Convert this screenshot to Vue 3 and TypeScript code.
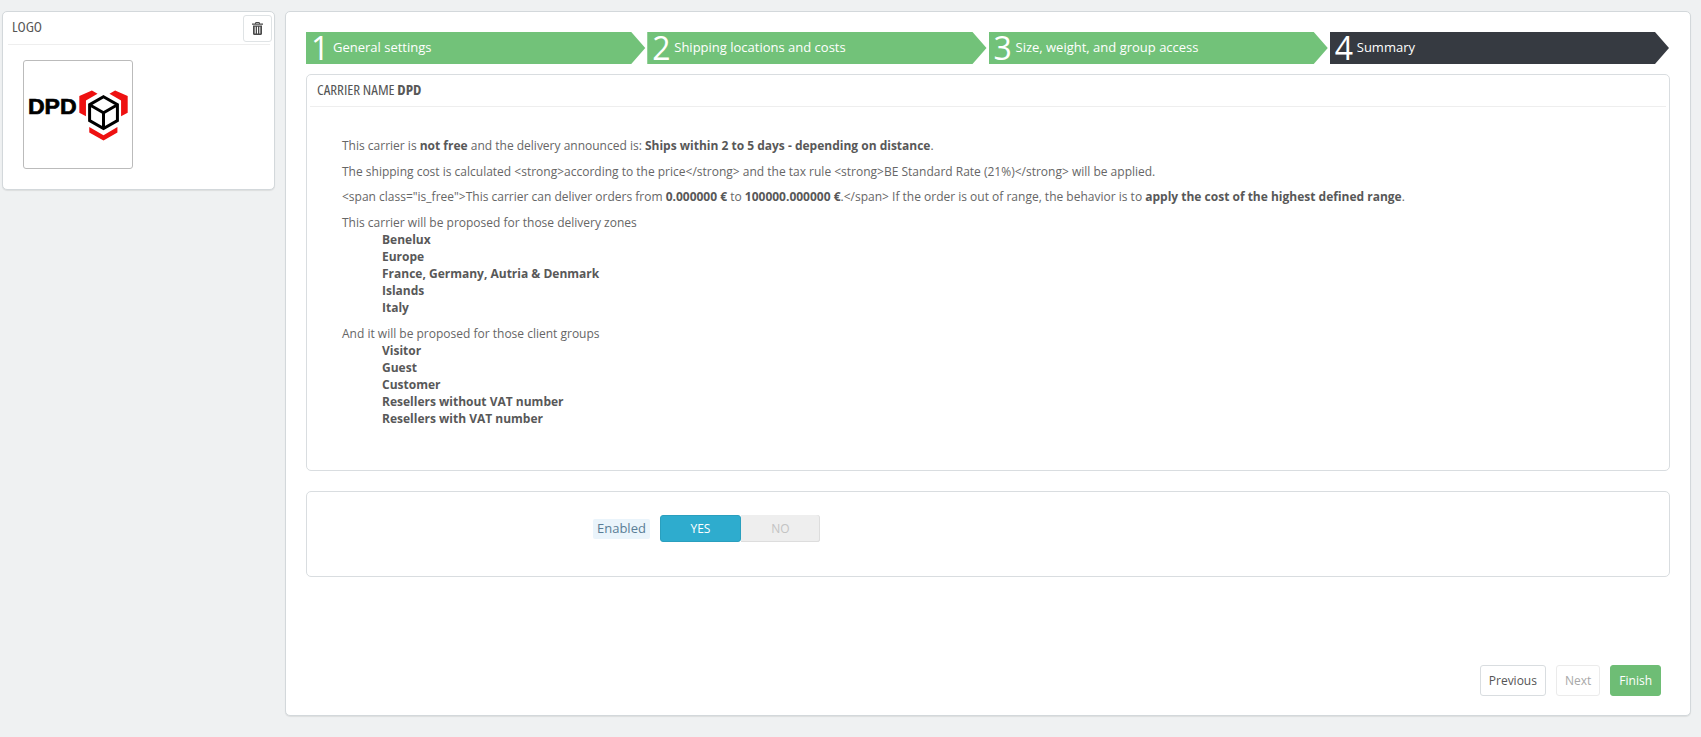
<script setup lang="ts">
interface Step { num: number; title: string; active?: boolean }
const steps: Step[] = [
  { num: 1, title: 'General settings' },
  { num: 2, title: 'Shipping locations and costs' },
  { num: 3, title: 'Size, weight, and group access' },
  { num: 4, title: 'Summary', active: true },
]
const zones = ['Benelux', 'Europe', 'France, Germany, Autria & Denmark', 'Islands', 'Italy']
const groups = ['Visitor', 'Guest', 'Customer', 'Resellers without VAT number', 'Resellers with VAT number']
</script>

<template>
  <div class="page">
    <aside class="panel side">
      <div class="side-head">
        <span class="head-text">LOGO</span>
        <button class="trash" type="button" aria-label="Delete">
          <svg width="11" height="13" viewBox="0 0 11 13">
            <path fill="#4a4a4a" d="M3.6 0h3.8l.7 1.6H11v1.2H0V1.6h2.9zM4.2.9l-.3.7h3.2l-.3-.7zM1 3.4h9v8.4c0 .7-.5 1.2-1.1 1.2H2.1C1.500 13 1 12.500 1 11.800zM2.700 4.700v6.900h1V4.700zM5 4.700v6.900h1V4.700zM7.300 4.700v6.900h1V4.700z" />
          </svg>
        </button>
      </div>
      <div class="logo-box">
        <svg width="108" height="107" viewBox="71 179 326 323">
          <text x="83" y="340" class="logo-text" textLength="147" lengthAdjust="spacingAndGlyphs">DPD</text>
          <path fill="#ee1111" d="M276 268l17 10-35 20v48l-20-11v-50zM346 268l-17 10 35 20v48l20-11v-50zM268 378l43 25 42-25v17l-42 24-43-24z" />
          <path fill="none" stroke="#000" stroke-width="9" stroke-linejoin="miter" d="M311 287l42 24v48l-42 24-42-24v-48zM269 311l42 24 42-24M311 335v48" />
        </svg>
      </div>
    </aside>

    <main class="panel main">
      <div class="stepper">
        <div v-for="s in steps" :key="s.num" class="step" :class="{ active: s.active }">
          <span class="num">{{ s.num }}</span>
          <span class="title">{{ s.title }}</span>
        </div>
      </div>

      <section class="card summary">
        <div class="card-head">CARRIER NAME <b>DPD</b></div>
        <div class="summary-body">
          <p>This carrier is <b>not free</b> and the delivery announced is: <b>Ships within 2 to 5 days - depending on distance</b>.</p>
          <p>The shipping cost is calculated &lt;strong&gt;according to the price&lt;/strong&gt; and the tax rule &lt;strong&gt;BE Standard Rate (21%)&lt;/strong&gt; will be applied.</p>
          <p>&lt;span class="is_free"&gt;This carrier can deliver orders from <b>0.000000 €</b> to <b>100000.000000 €</b>.&lt;/span&gt; If the order is out of range, the behavior is to <b>apply the cost of the highest defined range</b>.</p>
          <div class="block">
            This carrier will be proposed for those delivery zones
            <ul><li v-for="z in zones" :key="z">{{ z }}</li></ul>
          </div>
          <div class="block">
            And it will be proposed for those client groups
            <ul><li v-for="g in groups" :key="g">{{ g }}</li></ul>
          </div>
        </div>
      </section>

      <section class="card status">
        <span class="label">Enabled</span>
        <div class="switch">
          <span class="yes">YES</span>
          <span class="no">NO</span>
        </div>
      </section>

      <footer class="actions">
        <button type="button" class="btn">Previous</button>
        <button type="button" class="btn disabled">Next</button>
        <button type="button" class="btn finish">Finish</button>
      </footer>
    </main>
  </div>
</template>

<style>
html, body { margin: 0; background: #eff1f2; }
</style>

<style scoped>
.page {
  display: flex;
  align-items: flex-start;
  gap: 10px;
  height: 737px;
  box-sizing: border-box;
  padding: 11px 10px 0 2px;
  font-family: "Open Sans", sans-serif;
  font-size: 12px;
  line-height: 17px;
  color: #666;
}
.panel {
  box-sizing: border-box;
  background: #fff;
  border: 1px solid #d3d8db;
  border-radius: 5px;
  box-shadow: 0 1px 1px rgba(0, 0, 0, .08);
}
.side { width: 273px; height: 179px; padding: 2px 1px 0 5px; flex: none; }
.side-head {
  display: flex;
  justify-content: space-between;
  align-items: center;
  height: 30px;
  margin-right: 3px;
  padding-left: 4px;
  border-bottom: 1px solid #eee;
}
.head-text, .card-head {
  font-family: "Open Sans", sans-serif;
  font-stretch: 75%;
  font-size: 15px;
  color: #555;
}
.head-text { margin-top: -5px; }
.trash {
  display: flex;
  align-items: center;
  justify-content: center;
  width: 29px;
  height: 27px;
  margin: 0 -2px 2px 0;
  padding: 0;
  background: #fff;
  border: 1px solid #dfe3e5;
  border-radius: 3px;
}
.logo-box {
  width: 110px;
  height: 109px;
  box-sizing: border-box;
  margin: 15px 0 0 15px;
  border: 1px solid #bbb;
  border-radius: 3px;
}
.logo-box svg { display: block; }
.logo-text {
  font-family: "Liberation Sans", sans-serif;
  font-weight: 700;
  font-size: 66px;
  fill: #000;
  stroke: #000;
  stroke-width: 2px;
}
.main {
  flex: 1;
  height: 705px;
  display: flex;
  flex-direction: column;
  padding: 20px 20px 19px;
}
.stepper { display: grid; grid-template-columns: repeat(4, 1fr); margin-right: -1px; }
.step {
  display: flex;
  align-items: center;
  height: 32px;
  background: #72c279;
  color: #fff;
  padding-left: 5px;
  clip-path: polygon(0 0, calc(100% - 16px) 0, calc(100% - 2px) 50%, calc(100% - 16px) 100%, 0 100%);
}
.step.active { background: #363a41; }
.num { font-size: 32px; font-weight: 400; line-height: 32px; width: 19px; margin-right: 3px; flex: none; }
.title { font-size: 13px; margin-top: -2px; }
.card {
  box-sizing: border-box;
  background: #fff;
  border: 1px solid #d9dde0;
  border-radius: 5px;
}
.summary { height: 397px; margin-top: 10px; padding: 0 3px; }
.card-head {
  height: 32px;
  line-height: 29px;
  padding-left: 7px;
  box-sizing: border-box;
  border-bottom: 1px solid #eee;
}
.summary-body { padding: 30px 0 0 32px; }
p { margin: 0 0 9px; }
p:nth-child(2) { margin-bottom: 8px; }
.block { margin-bottom: 9px; }
b, li { font-weight: 700; color: #585858; }
ul { list-style: none; margin: 0; padding: 0 0 0 40px; }
.status {
  display: flex;
  align-items: flex-start;
  height: 86px;
  margin-top: 20px;
  padding: 23px 0 0 286px;
}
.label {
  height: 20px;
  margin-top: 4px;
  padding: 0 4px;
  line-height: 19px;
  font-size: 13px;
  color: #5a7d96;
  background: #eaf4fb;
  border-radius: 2px;
}
.switch { display: flex; width: 160px; height: 27px; margin-left: 10px; font-size: 12px; }
.yes, .no { flex: 1; display: flex; align-items: center; justify-content: center; }
.yes { background: #2eacce; color: #fff; border-radius: 3px; border: 1px solid #2a9fbe; }
.no { background: #eee; color: #c3c3c3; border-radius: 0 3px 3px 0; box-shadow: inset 0 -1px 0 #ddd, inset -1px 0 0 #ddd; }
.actions { margin-top: auto; display: flex; justify-content: flex-end; gap: 10px; padding-right: 9px; }
.btn {
  height: 31px;
  padding: 0 8px;
  font-family: "Open Sans", sans-serif;
  font-size: 12px;
  background: #fff;
  color: #555;
  border: 1px solid #d9dde0;
  border-radius: 3px;
}
.btn.disabled { color: #a8a8a8; border-color: #ebebeb; }
.btn.finish { background: #6ebd75; border-color: #6ebd75; color: #fff; }
</style>
